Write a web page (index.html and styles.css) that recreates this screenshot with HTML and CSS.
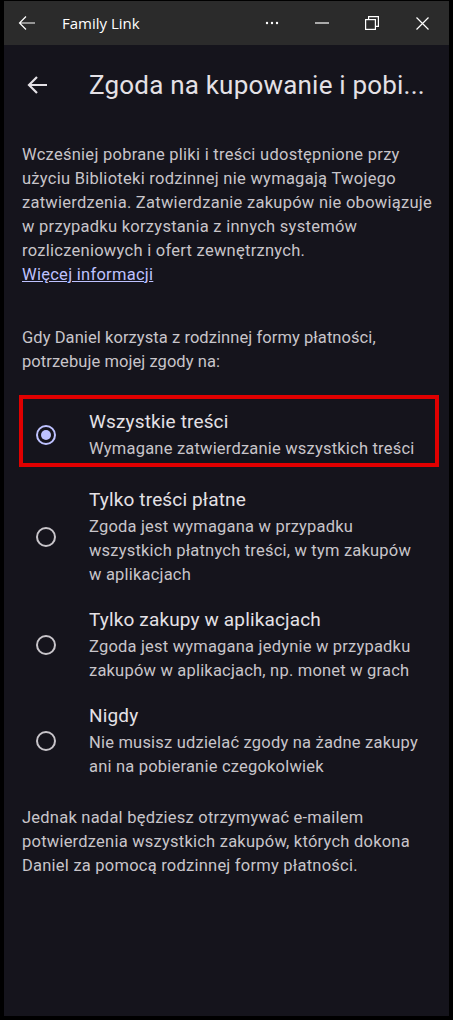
FILE: index.html
```html
<!DOCTYPE html>
<html lang="pl">
<head>
<meta charset="utf-8">
<title>Family Link</title>
<link rel="stylesheet" href="styles.css">
</head>
<body>
<div class="window">
  <div class="titlebar">
    <span class="tb-back">
      <svg width="18" height="16" viewBox="0 0 18 16"><path d="M17 8H2M8 1.5L1.5 8L8 14.5" fill="none" stroke="#fff" stroke-width="1.2"/></svg>
    </span>
    <span class="tb-title">Family Link</span>
    <span class="tb-controls">
      <span class="tb-btn">
        <svg width="14" height="4" viewBox="0 0 14 4"><circle cx="2" cy="2" r="1.2" fill="#fff"/><circle cx="7" cy="2" r="1.2" fill="#fff"/><circle cx="12" cy="2" r="1.2" fill="#fff"/></svg>
      </span>
      <span class="tb-btn">
        <svg width="14" height="2" viewBox="0 0 14 2"><path d="M0 1H14" stroke="#fff" stroke-width="1.2"/></svg>
      </span>
      <span class="tb-btn">
        <svg width="14" height="14" viewBox="0 0 14 14"><rect x="0.6" y="3.6" width="9.8" height="9.8" fill="none" stroke="#fff" stroke-width="1.2"/><path d="M3.6 3.6V0.6H13.4V10.4H10.4" fill="none" stroke="#fff" stroke-width="1.2"/></svg>
      </span>
      <span class="tb-btn">
        <svg width="13" height="13" viewBox="0 0 13 13"><path d="M0.5 0.5L12.5 12.5M12.5 0.5L0.5 12.5" stroke="#fff" stroke-width="1.2"/></svg>
      </span>
    </span>
  </div>

  <div class="appbar">
    <span class="ab-back">
      <svg width="22" height="20" viewBox="0 0 22 20"><path d="M21 10H3M11 2L3 10L11 18" fill="none" stroke="#e4e1e6" stroke-width="2.2"/></svg>
    </span>
    <h1 class="ab-title">Zgoda na kupowanie i pobi...</h1>
  </div>

  <div class="content">
    <p class="text lead">Wcześniej pobrane pliki i treści udostępnione przy<br>użyciu Biblioteki rodzinnej nie wymagają Twojego<br>zatwierdzenia. Zatwierdzanie zakupów nie obowiązuje<br>w przypadku korzystania z innych systemów<br>rozliczeniowych i ofert zewnętrznych.<br><a class="link" href="#">Więcej informacji</a></p>

    <p class="text intro">Gdy Daniel korzysta z rodzinnej formy płatności,<br>potrzebuje mojej zgody na:</p>

    <div class="options">
      <div class="option selected">
        <span class="radio">
          <svg width="22" height="22" viewBox="0 0 22 22"><circle cx="11" cy="11" r="9" fill="none" stroke="#bec2ff" stroke-width="2"/><circle cx="11" cy="11" r="5" fill="#bec2ff"/></svg>
        </span>
        <div class="opt-text">
          <div class="opt-title">Wszystkie treści</div>
          <div class="opt-desc">Wymagane zatwierdzanie wszystkich treści</div>
        </div>
      </div>
      <div class="option">
        <span class="radio">
          <svg width="22" height="22" viewBox="0 0 22 22"><circle cx="11" cy="11" r="9" fill="none" stroke="#c8c5ca" stroke-width="2"/></svg>
        </span>
        <div class="opt-text">
          <div class="opt-title">Tylko treści płatne</div>
          <div class="opt-desc">Zgoda jest wymagana w przypadku<br>wszystkich płatnych treści, w tym zakupów<br>w aplikacjach</div>
        </div>
      </div>
      <div class="option">
        <span class="radio">
          <svg width="22" height="22" viewBox="0 0 22 22"><circle cx="11" cy="11" r="9" fill="none" stroke="#c8c5ca" stroke-width="2"/></svg>
        </span>
        <div class="opt-text">
          <div class="opt-title">Tylko zakupy w aplikacjach</div>
          <div class="opt-desc">Zgoda jest wymagana jedynie w przypadku<br>zakupów w aplikacjach, np. monet w grach</div>
        </div>
      </div>
      <div class="option">
        <span class="radio">
          <svg width="22" height="22" viewBox="0 0 22 22"><circle cx="11" cy="11" r="9" fill="none" stroke="#c8c5ca" stroke-width="2"/></svg>
        </span>
        <div class="opt-text">
          <div class="opt-title">Nigdy</div>
          <div class="opt-desc">Nie musisz udzielać zgody na żadne zakupy<br>ani na pobieranie czegokolwiek</div>
        </div>
      </div>
    </div>

    <p class="text footer">Jednak nadal będziesz otrzymywać e-mailem<br>potwierdzenia wszystkich zakupów, których dokona<br>Daniel za pomocą rodzinnej formy płatności.</p>
  </div>
</div>
</body>
</html>
```

FILE: styles.css
```css
html, body {
  margin: 0;
  padding: 0;
  background: #000;
}
.window {
  box-sizing: border-box;
  width: 453px;
  height: 1020px;
  border: 4px solid #000;
  border-top: 1px solid #000;
  background: #15141c;
  display: flex;
  flex-direction: column;
  font-family: Roboto, "Noto Sans", sans-serif;
  overflow: hidden;
}
.titlebar {
  height: 44px;
  flex: none;
  background: #2b2b2b;
  display: flex;
  align-items: center;
  color: #fff;
}
.tb-back {
  width: 18px;
  margin-left: 14px;
  display: flex;
  align-items: center;
}
.tb-title {
  margin-left: 26px;
  font-family: "Open Sans", "Noto Sans", sans-serif;
  font-size: 15px;
  color: #fff;
}
.tb-controls {
  margin-left: auto;
  margin-right: 2px;
  display: flex;
  align-items: center;
}
.tb-btn {
  width: 50px;
  display: flex;
  justify-content: center;
  align-items: center;
}
.appbar {
  height: 80px;
  flex: none;
  display: flex;
  align-items: center;
}
.ab-back {
  margin-left: 22px;
  width: 22px;
  display: flex;
}
.ab-title {
  margin: 0 0 0 41px;
  font-weight: 400;
  font-size: 26px;
  letter-spacing: 0.2px;
  color: #e4e1e6;
  white-space: nowrap;
}
.content {
  padding: 18px 18px 0 18px;
}
.text {
  margin: 0;
  font-size: 16.5px;
  line-height: 24px;
  color: #c8c5ca;
  white-space: nowrap;
}
.lead {
  letter-spacing: 0.27px;
}
.intro {
  margin-top: 39px;
  letter-spacing: 0.07px;
}
.link {
  color: #bec2ff;
  text-decoration: underline;
}
.options {
  margin-top: 21px;
  display: flex;
  flex-direction: column;
}
.option {
  display: flex;
  align-items: center;
  border: 4px solid transparent;
  margin: 0 -8px 0 -3px;
  padding: 6px 0;
}
.option.selected {
  border-color: #e00000;
  padding: 10px 0 2px;
  margin-bottom: 10px;
}
.radio {
  width: 22px;
  margin-left: 12px;
  display: flex;
}
.opt-text {
  margin-left: 32px;
}
.opt-title {
  font-size: 19px;
  line-height: 26px;
  letter-spacing: 0.15px;
  color: #e4e1e6;
  white-space: nowrap;
}
.opt-desc {
  margin-top: 2px;
  font-size: 16.5px;
  line-height: 24px;
  letter-spacing: 0.2px;
  color: #c8c5ca;
  white-space: nowrap;
}
.footer {
  margin-top: 17px;
  letter-spacing: 0.23px;
}
```
